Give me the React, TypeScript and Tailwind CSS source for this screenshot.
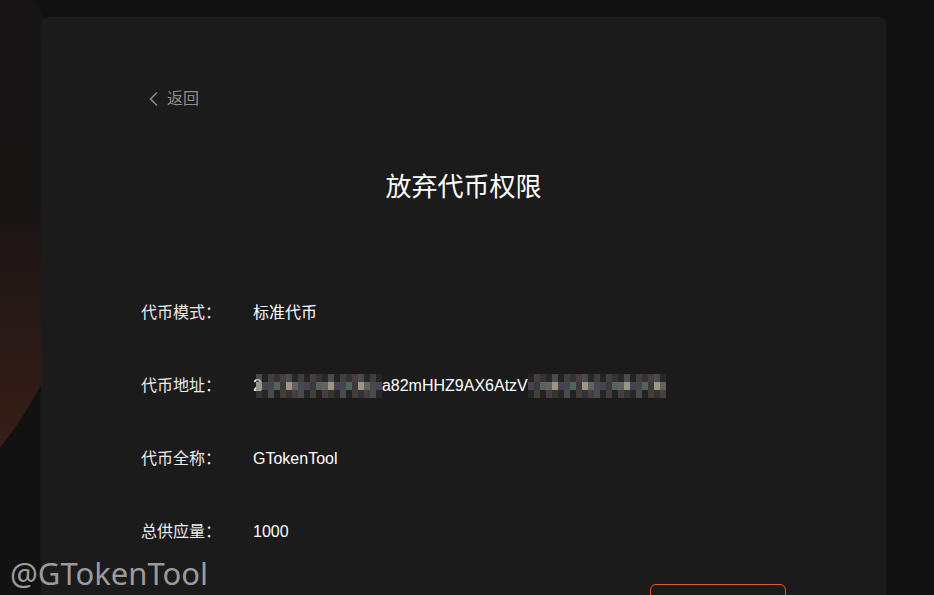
import React from 'react';

const palette = [
  'bg-[#2b2b2b]',
  'bg-[#3a3a3a]',
  'bg-[#4d4d4d]',
  'bg-[#626262]',
  'bg-[#7c7c7c]',
  'bg-[#4a4152]',
  'bg-[#6b6258]',
  'bg-[#55635f]',
  'bg-[#76606c]',
  'bg-[#9c9684]',
  'bg-[#333333]',
  'bg-[#444a4c]',
];

const Pixelated: React.FC<{ cols: number; seed: number }> = ({ cols, seed }) => {
  const rows = [0, 1, 2];
  return (
    <span className="inline-flex flex-col align-middle">
      {rows.map((r) => (
        <span key={r} className="flex">
          {Array.from({ length: cols }).map((_, i) => {
            const idx = (i * 7 + r * 5 + seed * 3 + ((i * i + seed) % 4)) % palette.length;
            const faint = r === 0 || r === 2;
            return (
              <span
                key={i}
                className={`block w-[6px] h-[8px] ${palette[idx]} ${faint ? 'opacity-50' : ''}`}
              />
            );
          })}
        </span>
      ))}
    </span>
  );
};

const Row: React.FC<{ label: string; children: React.ReactNode }> = ({ label, children }) => (
  <div className="flex items-center h-6 text-base">
    <span className="w-[112px] text-[#ececec]">{label}</span>
    <span className="text-white flex items-center">{children}</span>
  </div>
);

const App: React.FC = () => {
  return (
    <div
      className="relative min-h-screen bg-[#121212] overflow-hidden"
      style={{ fontFamily: '"Liberation Sans", "Noto Sans CJK SC", sans-serif' }}
    >
      {/* red glow on the left */}
      <div className="absolute left-[-717px] top-[-204px] w-[804px] h-[804px] rounded-full bg-gradient-to-b from-[#141414] via-[#171414] to-[#4e2318]" />

      <div className="relative ml-[41px] mt-[17px] w-[845px] h-[640px] bg-[#1b1b1b] rounded-lg px-[100px] pt-[70px]">
        <button className="flex items-center gap-[7px] ml-[7px] h-6 text-[#8e8e8e] text-base">
          <svg width="12" height="16" viewBox="0 0 12 16" fill="none">
            <polyline points="9,1.5 2.5,8 9,14.5" stroke="#8e8e8e" strokeWidth="1.5" />
          </svg>
          <span>返回</span>
        </button>

        <h1 className="mt-[58px] text-center text-[26px] leading-9 text-white">放弃代币权限</h1>

        <div className="mt-[96px] flex flex-col gap-[49px]">
          <Row label="代币模式：">标准代币</Row>
          <Row label="代币地址：">
            <span>2</span>
            <span className="-ml-[6px]">
              <Pixelated cols={21} seed={1} />
            </span>
            <span>a82mHHZ9AX6AtzV</span>
            <Pixelated cols={23} seed={4} />
          </Row>
          <Row label="代币全称：">GTokenTool</Row>
          <Row label="总供应量：">1000</Row>
        </div>

        <div className="mt-[40px] flex justify-end">
          <button className="w-[136px] h-10 rounded-md border border-[#e4572e] text-[#e4572e]" />
        </div>
      </div>

      <div
        className="absolute left-[10px] top-[553px] text-[31px] leading-10 text-[#9b9b9b]"
        style={{ fontFamily: '"Noto Sans", sans-serif' }}
      >
        @GTokenTool
      </div>
    </div>
  );
};

export default App;
